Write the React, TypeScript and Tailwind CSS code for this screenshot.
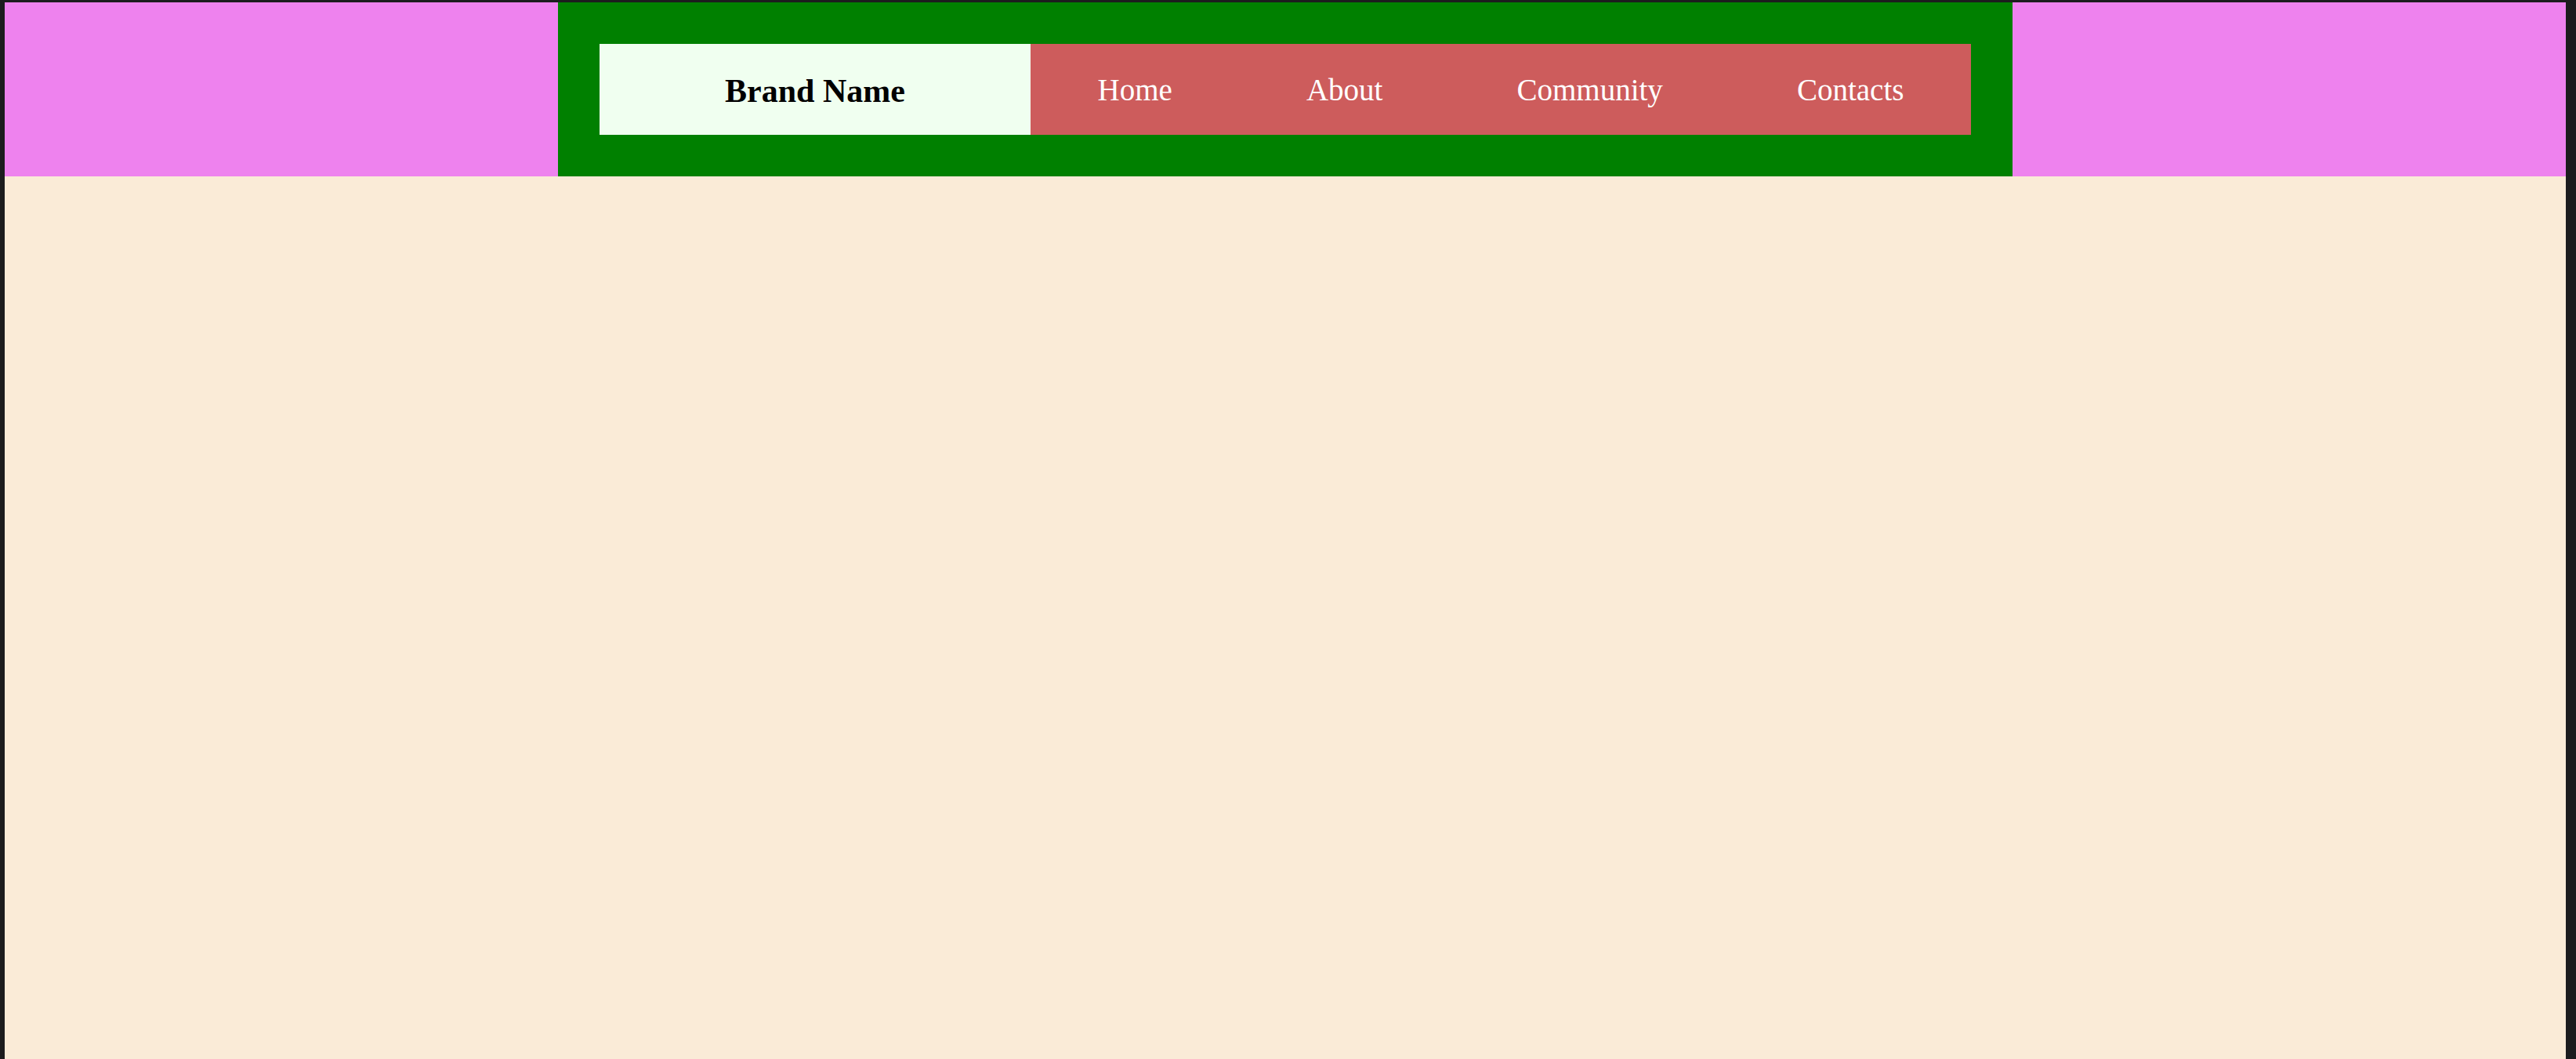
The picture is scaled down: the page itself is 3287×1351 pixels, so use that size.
import React from "react";

const links = ["Home", "About", "Community", "Contacts"];

const App: React.FC = () => {
  return (
    <div className="h-screen flex bg-[#1c1c1e] pt-[3px] pl-[6px] pr-[13px] font-['Liberation_Serif',serif]">
      <div className="flex-1 flex flex-col bg-[#faebd7]">
        <header className="flex justify-center bg-[#ee82ee]">
          <nav className="flex bg-[#008000] p-[53px]">
            <div className="w-[550px] h-[116px] flex items-center justify-center bg-[#f0fff0] text-black font-bold text-[42px] pt-[4px]">
              Brand Name
            </div>
            <ul className="w-[1200px] h-[116px] flex items-center justify-around bg-[#cd5c5c] pt-[2px]">
              {links.map((item) => (
                <li key={item} className="text-white text-[39px] cursor-pointer">
                  {item}
                </li>
              ))}
            </ul>
          </nav>
        </header>
      </div>
    </div>
  );
};

export default App;
